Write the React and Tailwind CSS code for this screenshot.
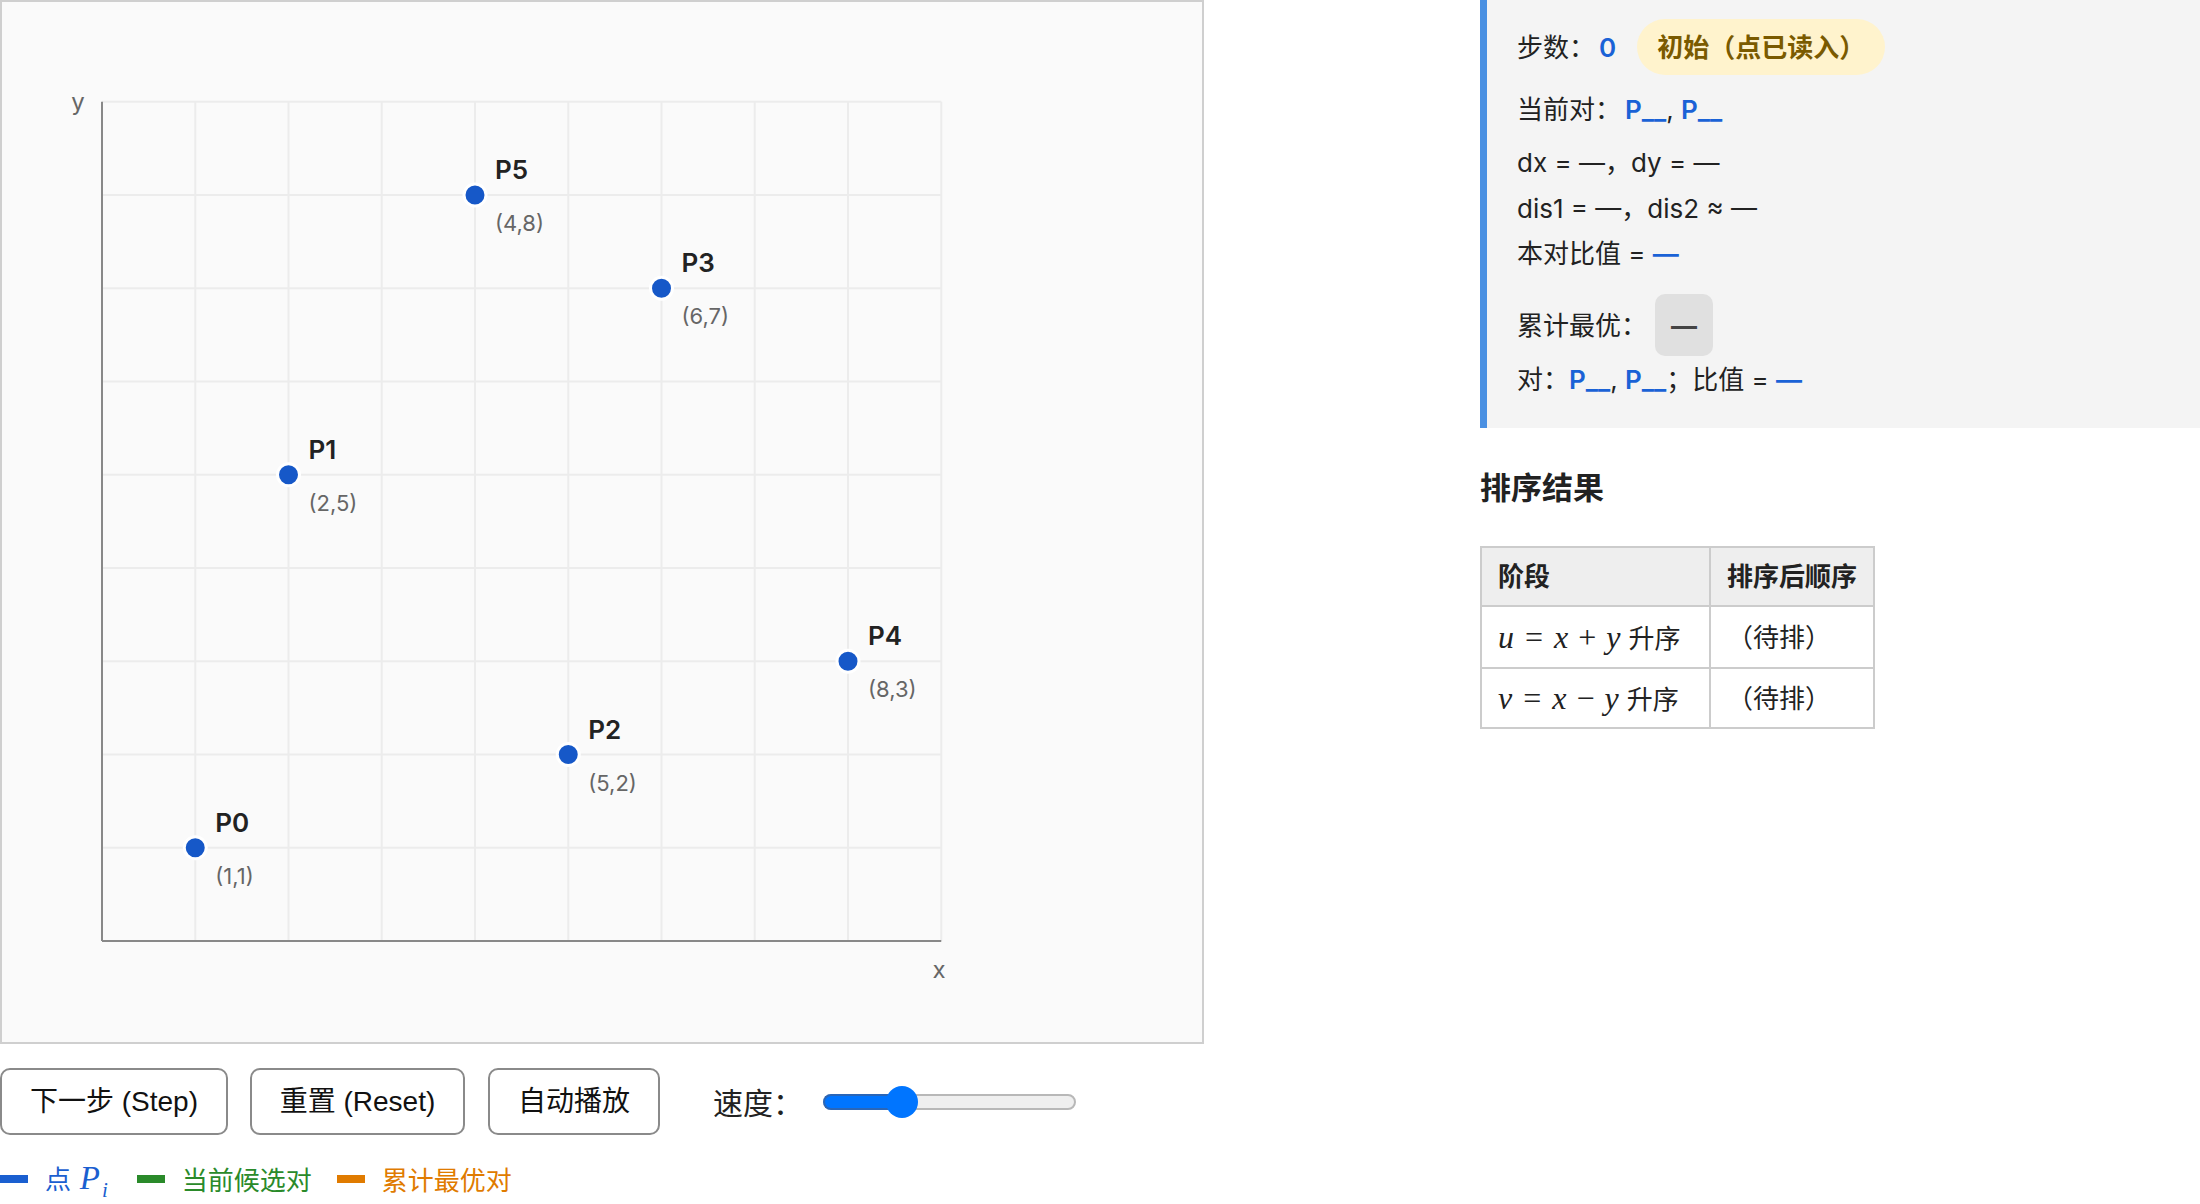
import React from 'react';

// 点集（坐标单位）
const PTS = [
  { name: 'P0', x: 1, y: 1 },
  { name: 'P1', x: 2, y: 5 },
  { name: 'P2', x: 5, y: 2 },
  { name: 'P3', x: 6, y: 7 },
  { name: 'P4', x: 8, y: 3 },
  { name: 'P5', x: 4, y: 8 },
];
const OX = 100;
const OY = 939;
const U = 93.25;
const N = 9;

function Plot() {
  const ticks = Array.from({ length: N }, (_, i) => i + 1);
  const end = OX + N * U;
  const top = OY - N * U;
  return (
    <svg width="1200" height="1040" className="block">
      {ticks.map((k) => (
        <line key={'v' + k} x1={OX + k * U} y1={top} x2={OX + k * U} y2={OY} stroke="#ececec" strokeWidth="2" />
      ))}
      {ticks.map((k) => (
        <line key={'h' + k} x1={OX} y1={OY - k * U} x2={end} y2={OY - k * U} stroke="#ececec" strokeWidth="2" />
      ))}
      <line x1={OX} y1={OY} x2={end} y2={OY} stroke="#888" strokeWidth="2" />
      <line x1={OX} y1={top} x2={OX} y2={OY} stroke="#888" strokeWidth="2" />
      <text x="76" y="108" fontSize="24" fill="#666" textAnchor="middle" fontFamily="Inter, sans-serif">y</text>
      <text x="937" y="976" fontSize="24" fill="#666" textAnchor="middle" fontFamily="Inter, sans-serif">x</text>
      {PTS.map((p) => {
        const cx = OX + p.x * U;
        const cy = OY - p.y * U;
        return (
          <g key={p.name}>
            <circle cx={cx} cy={cy} r="11" fill="#1658c8" stroke="#fff" strokeWidth="3" />
            <text x={cx + 20} y={cy - 16} fontSize="26" fontWeight="600" fill="#222" fontFamily="Inter, sans-serif">{p.name}</text>
            <text x={cx + 20} y={cy + 36} fontSize="22" fill="#666" fontFamily="Inter, sans-serif">({p.x},{p.y})</text>
          </g>
        );
      })}
    </svg>
  );
}

function Btn({ w, children }) {
  return (
    <button className={`h-[67px] ${w} rounded-[10px] border-2 border-[#8a8a8a] bg-white text-[28px] text-[#111] font-['Liberation_Sans','Noto_Sans_CJK_SC',sans-serif]`}>
      {children}
    </button>
  );
}

function Blue({ children }) {
  return <span className="text-[#1a62d6] font-semibold">{children}</span>;
}

// 带长下划线的 P
function Pu() {
  return <Blue>P__</Blue>;
}

function MathRow({ a, op }) {
  return (
    <span className="font-['Liberation_Serif',serif] text-[32px]">
      <i>{a}</i><span className="mx-[11px]">=</span><i>x</i><span className="mx-[10px]">{op}</span><i>y</i>
    </span>
  );
}

export default function App() {
  return (
    <div className="flex items-start bg-white min-h-[1204px] overflow-hidden text-[#222] font-['Inter','Noto_Sans_CJK_SC',sans-serif]">
      {/* 左侧：画布 + 控制 */}
      <div className="w-[1204px] shrink-0">
        <div className="w-[1204px] h-[1044px] border-2 border-[#cfcfcf] bg-[#fafafa]">
          <Plot />
        </div>

        <div className="mt-[24px] flex items-center">
          <Btn w="w-[228px]">下一步 (Step)</Btn>
          <div className="ml-[22px]"><Btn w="w-[215px]">重置 (Reset)</Btn></div>
          <div className="ml-[23px]"><Btn w="w-[172px]">自动播放</Btn></div>
          <span className="ml-[53px] text-[30px] text-[#222] font-['Noto_Sans_CJK_SC',sans-serif]">速度：</span>
          <div className="relative ml-[20px] h-[32px] w-[253px]">
            <div className="absolute left-0 right-0 top-[8px] h-[16px] rounded-full border-2 border-[#b8b8b8] bg-[#efefef]" />
            <div className="absolute left-0 top-[8px] h-[16px] w-[82px] rounded-l-full border-2 border-r-0 border-[#2a66b8] bg-[#0075ff]" />
            <div className="absolute left-[63px] top-0 h-[32px] w-[32px] rounded-full bg-[#0075ff]" />
          </div>
        </div>

        <div className="mt-[19px] flex items-center gap-[25px] text-[26px] font-['Noto_Sans_CJK_SC',sans-serif]">
          <div className="flex items-center gap-[17px]">
            <span className="w-[28px] h-[8px] bg-[#1a5fd0]" />
            <span className="text-[#1a5fd0]">
              点 <span className="ml-[3px] font-['Liberation_Serif',serif] italic text-[33px]">P<span className="relative top-[8px] ml-[2px] text-[21px]">i</span></span>
            </span>
          </div>
          <div className="ml-[4px] flex items-center gap-[17px]">
            <span className="w-[28px] h-[8px] bg-[#2a8a2a]" />
            <span className="text-[#2a8a2a]">当前候选对</span>
          </div>
          <div className="flex items-center gap-[17px]">
            <span className="w-[28px] h-[8px] bg-[#e07b00]" />
            <span className="text-[#e07b00]">累计最优对</span>
          </div>
        </div>
      </div>

      {/* 右侧：状态面板 */}
      <div className="ml-[276px] flex-1">
        <div className="bg-[#f4f4f4] border-l-[7px] border-[#4a90e2] pl-[30px] pt-[19px] pb-[26px] text-[26px]">
          <div className="h-[56px] flex items-center">
            <span>步数：</span>
            <span className="ml-[4px]"><Blue>0</Blue></span>
            <span className="ml-[21px] h-[56px] px-[20px] rounded-full bg-[#fff3cd] text-[#7a5a00] font-bold flex items-center">初始（点已读入）</span>
          </div>
          <div className="mt-[11px] h-[46px] flex items-center">
            <span>当前对：</span>
            <span className="ml-[4px]"><Pu />, <Pu /></span>
          </div>
          <div className="mt-[8px] h-[45.5px] flex items-center whitespace-pre">dx = —，dy = —</div>
          <div className="h-[45.5px] flex items-center whitespace-pre">dis1 = —，dis2 ≈ —</div>
          <div className="h-[45.5px] flex items-center whitespace-pre">本对比值 = <Blue>—</Blue></div>
          <div className="mt-[17.5px] h-[62px] flex items-center">
            <span>累计最优：</span>
            <span className="ml-[8px] h-[62px] px-[16px] rounded-[10px] bg-[#e0e0e0] text-[#444] font-bold flex items-center">—</span>
          </div>
          <div className="h-[46px] flex items-center whitespace-pre">
            对：<Pu />, <Pu />；比值 = <Blue>—</Blue>
          </div>
        </div>

        <h3 className="mt-[40px] text-[31px] leading-[40px] font-bold text-[#222]">排序结果</h3>

        <table className="mt-[38px] w-[393px] table-fixed border-collapse text-[26px] text-[#222]">
          <thead>
            <tr className="bg-[#eee] h-[59px]">
              <th className="w-[229px] border-2 border-[#ccc] px-[16px] text-left font-bold">阶段</th>
              <th className="w-[164px] border-2 border-[#ccc] px-[16px] text-left font-bold whitespace-nowrap">排序后顺序</th>
            </tr>
          </thead>
          <tbody>
            <tr className="h-[62px]">
              <td className="border-2 border-[#ccc] px-[16px] whitespace-nowrap">
                <MathRow a="u" op="+" /><span className="ml-[8px]">升序</span>
              </td>
              <td className="border-2 border-[#ccc] px-[16px]">（待排）</td>
            </tr>
            <tr className="h-[60px]">
              <td className="border-2 border-[#ccc] px-[16px] whitespace-nowrap">
                <MathRow a="v" op="−" /><span className="ml-[8px]">升序</span>
              </td>
              <td className="border-2 border-[#ccc] px-[16px]">（待排）</td>
            </tr>
          </tbody>
        </table>
      </div>
    </div>
  );
}
